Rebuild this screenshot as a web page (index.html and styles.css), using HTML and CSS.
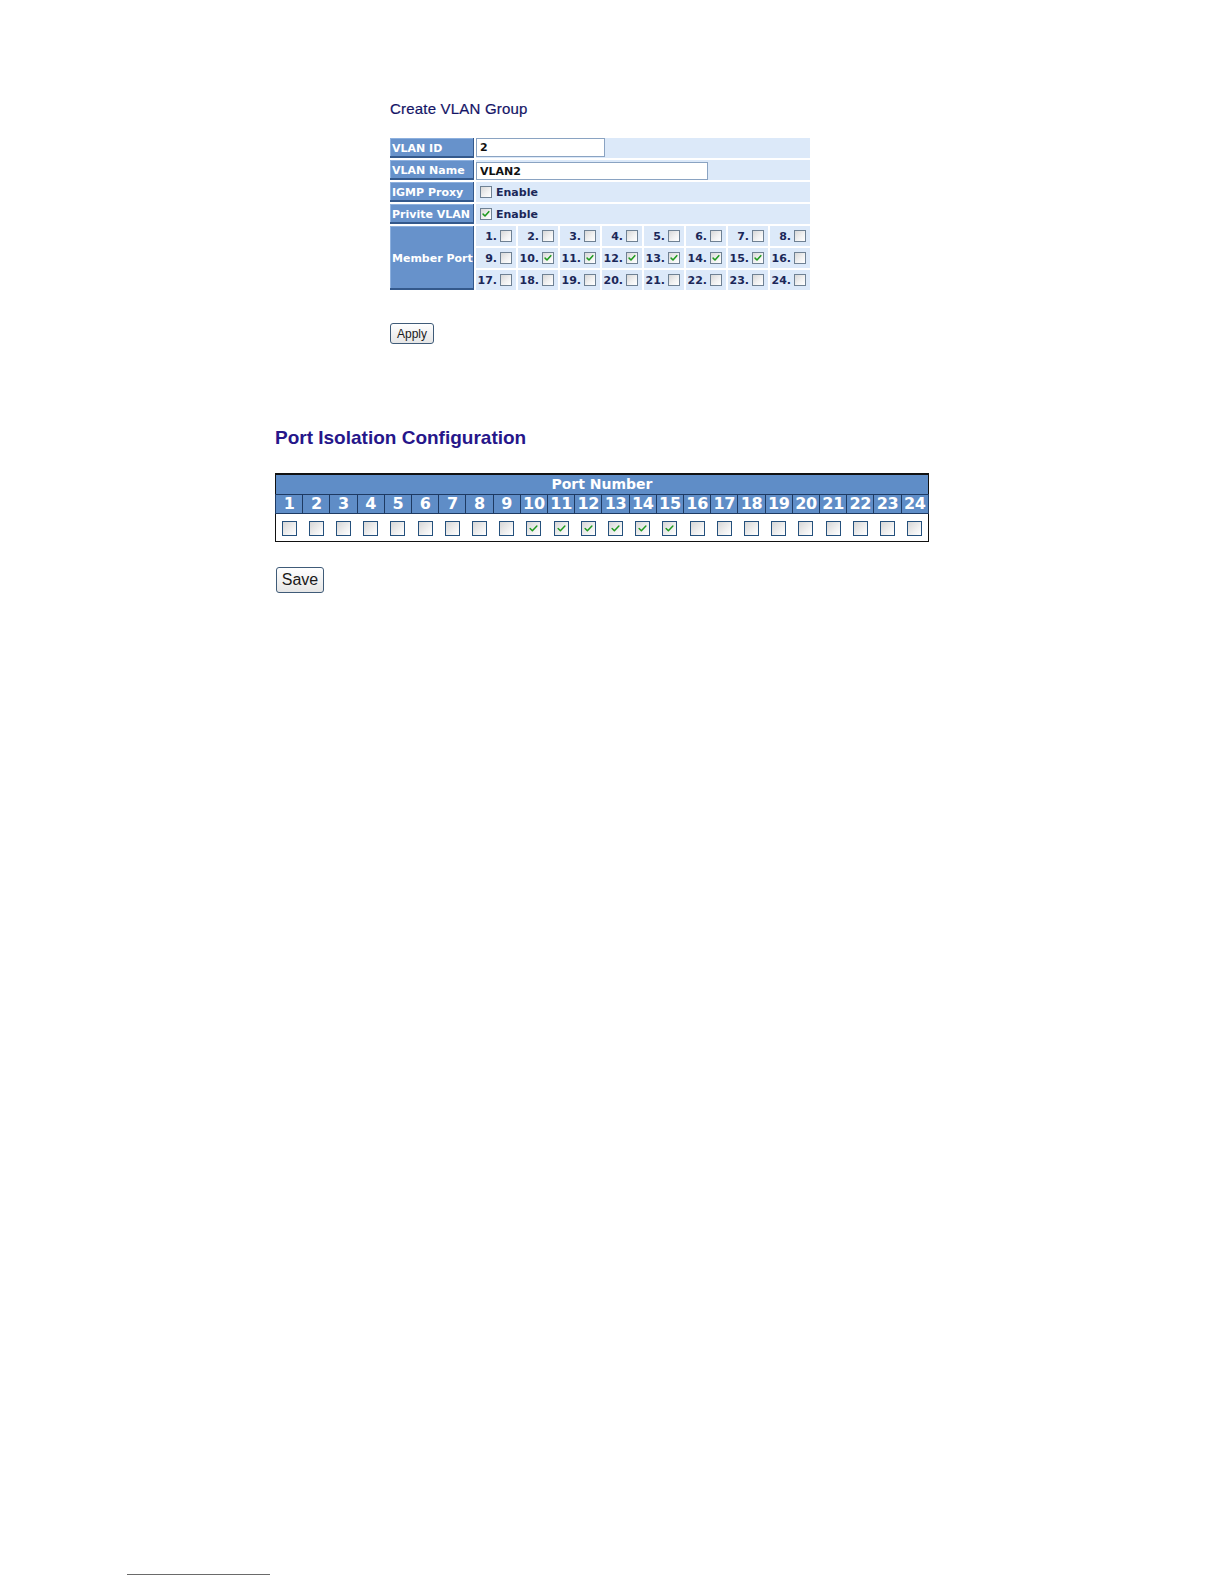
FILE: index.html
```html
<!DOCTYPE html>
<html>
<head>
<meta charset="utf-8">
<title>VLAN</title>
<link rel="stylesheet" href="styles.css">
</head>
<body>
<div class="page">
  <section class="vlan">
    <h2 class="vlan-title">Create VLAN Group</h2>
    <div class="vgrid">
      <div class="lbl r1">VLAN ID</div>
      <div class="val r1"><input class="txt txt-id" type="text" value="2" readonly></div>
      <div class="lbl r2">VLAN Name</div>
      <div class="val r2"><input class="txt txt-name" type="text" value="VLAN2" readonly></div>
      <div class="lbl r3">IGMP Proxy</div>
      <div class="val r3"><span class="cb"></span><span class="en">Enable</span></div>
      <div class="lbl r4">Privite VLAN</div>
      <div class="val r4"><span class="cb on"><svg viewBox="0 0 11 11"><path d="M2.3 5.6 L4.4 7.7 L8.6 2.9"/></svg></span><span class="en">Enable</span></div>
      <div class="lbl member">Member Port</div>
      <div class="mp"><span class="n">1.</span><span class="cb"></span></div>
      <div class="mp"><span class="n">2.</span><span class="cb"></span></div>
      <div class="mp"><span class="n">3.</span><span class="cb"></span></div>
      <div class="mp"><span class="n">4.</span><span class="cb"></span></div>
      <div class="mp"><span class="n">5.</span><span class="cb"></span></div>
      <div class="mp"><span class="n">6.</span><span class="cb"></span></div>
      <div class="mp"><span class="n">7.</span><span class="cb"></span></div>
      <div class="mp"><span class="n">8.</span><span class="cb"></span></div>
      <div class="mp"><span class="n">9.</span><span class="cb"></span></div>
      <div class="mp"><span class="n">10.</span><span class="cb on"><svg viewBox="0 0 11 11"><path d="M2.3 5.6 L4.4 7.7 L8.6 2.9"/></svg></span></div>
      <div class="mp"><span class="n">11.</span><span class="cb on"><svg viewBox="0 0 11 11"><path d="M2.3 5.6 L4.4 7.7 L8.6 2.9"/></svg></span></div>
      <div class="mp"><span class="n">12.</span><span class="cb on"><svg viewBox="0 0 11 11"><path d="M2.3 5.6 L4.4 7.7 L8.6 2.9"/></svg></span></div>
      <div class="mp"><span class="n">13.</span><span class="cb on"><svg viewBox="0 0 11 11"><path d="M2.3 5.6 L4.4 7.7 L8.6 2.9"/></svg></span></div>
      <div class="mp"><span class="n">14.</span><span class="cb on"><svg viewBox="0 0 11 11"><path d="M2.3 5.6 L4.4 7.7 L8.6 2.9"/></svg></span></div>
      <div class="mp"><span class="n">15.</span><span class="cb on"><svg viewBox="0 0 11 11"><path d="M2.3 5.6 L4.4 7.7 L8.6 2.9"/></svg></span></div>
      <div class="mp"><span class="n">16.</span><span class="cb"></span></div>
      <div class="mp"><span class="n">17.</span><span class="cb"></span></div>
      <div class="mp"><span class="n">18.</span><span class="cb"></span></div>
      <div class="mp"><span class="n">19.</span><span class="cb"></span></div>
      <div class="mp"><span class="n">20.</span><span class="cb"></span></div>
      <div class="mp"><span class="n">21.</span><span class="cb"></span></div>
      <div class="mp"><span class="n">22.</span><span class="cb"></span></div>
      <div class="mp"><span class="n">23.</span><span class="cb"></span></div>
      <div class="mp"><span class="n">24.</span><span class="cb"></span></div>
    </div>
    <button class="btn btn-apply" type="button">Apply</button>
  </section>

  <section class="iso">
    <h2 class="iso-title">Port Isolation Configuration</h2>
    <table class="ptable">
      <tr><th class="phead" colspan="24">Port Number</th></tr>
      <tr class="nums">
        <td>1</td><td>2</td><td>3</td><td>4</td><td>5</td><td>6</td><td>7</td><td>8</td><td>9</td><td>10</td><td>11</td><td>12</td><td>13</td><td>14</td><td>15</td><td>16</td><td>17</td><td>18</td><td>19</td><td>20</td><td>21</td><td>22</td><td>23</td><td>24</td>
      </tr>
      <tr class="boxes">
        <td><span class="bcb"></span></td>
        <td><span class="bcb"></span></td>
        <td><span class="bcb"></span></td>
        <td><span class="bcb"></span></td>
        <td><span class="bcb"></span></td>
        <td><span class="bcb"></span></td>
        <td><span class="bcb"></span></td>
        <td><span class="bcb"></span></td>
        <td><span class="bcb"></span></td>
        <td><span class="bcb on"><svg viewBox="0 0 15 15"><path d="M3.6 7.6 L6.2 10.1 L11.4 4.6"/></svg></span></td>
        <td><span class="bcb on"><svg viewBox="0 0 15 15"><path d="M3.6 7.6 L6.2 10.1 L11.4 4.6"/></svg></span></td>
        <td><span class="bcb on"><svg viewBox="0 0 15 15"><path d="M3.6 7.6 L6.2 10.1 L11.4 4.6"/></svg></span></td>
        <td><span class="bcb on"><svg viewBox="0 0 15 15"><path d="M3.6 7.6 L6.2 10.1 L11.4 4.6"/></svg></span></td>
        <td><span class="bcb on"><svg viewBox="0 0 15 15"><path d="M3.6 7.6 L6.2 10.1 L11.4 4.6"/></svg></span></td>
        <td><span class="bcb on"><svg viewBox="0 0 15 15"><path d="M3.6 7.6 L6.2 10.1 L11.4 4.6"/></svg></span></td>
        <td><span class="bcb"></span></td>
        <td><span class="bcb"></span></td>
        <td><span class="bcb"></span></td>
        <td><span class="bcb"></span></td>
        <td><span class="bcb"></span></td>
        <td><span class="bcb"></span></td>
        <td><span class="bcb"></span></td>
        <td><span class="bcb"></span></td>
        <td><span class="bcb"></span></td>
      </tr>
    </table>
    <button class="btn btn-save" type="button">Save</button>
  </section>

  <div class="footrule"></div>
</div>
</body>
</html>
```

FILE: styles.css
```css
html, body {
  margin: 0;
  padding: 0;
  background: #ffffff;
}

.page {
  width: 1224px;
  font-family: "Liberation Sans", Arial, sans-serif;
}

/* ---------- Create VLAN Group ---------- */
.vlan {
  padding-top: 100px;
  padding-left: 390px;
}

.vlan-title {
  margin: 0;
  font-family: "Liberation Sans", Arial, sans-serif;
  font-size: 15px;
  font-weight: normal;
  letter-spacing: 0.2px;
  line-height: 17px;
  color: #141466;
  -webkit-text-stroke: 0.2px #141466;
}

.vgrid {
  margin-top: 21px;
  width: 420px;
  display: grid;
  grid-template-columns: 84px repeat(8, 1fr);
  grid-auto-rows: 20px;
  gap: 2px;
  font-family: "DejaVu Sans", Verdana, sans-serif;
  font-size: 11px;
  font-weight: bold;
}

.lbl {
  grid-column: 1;
  background: #6792cb;
  color: #ffffff;
  display: flex;
  align-items: center;
  padding-left: 2px;
  box-sizing: border-box;
  box-shadow: inset -1px -2px 0 #34598c, inset 1px 1px 0 #8db0de;
  white-space: nowrap;
}

.lbl.member {
  grid-row: 5 / span 3;
}

.val {
  grid-column: 2 / span 8;
  background: #dce9f9;
  display: flex;
  align-items: center;
  padding-left: 4px;
  color: #1b2758;
}

.val.r1, .val.r2 {
  padding-left: 0;
  align-items: flex-start;
}

.txt {
  box-sizing: border-box;
  margin: 0;
  border: 1px solid #8aa3c2;
  background: #ffffff;
  font-family: "DejaVu Sans", Verdana, sans-serif;
  font-size: 11px;
  font-weight: bold;
  color: #111111;
  padding: 0 3px;
  outline: none;
}

.txt-id {
  width: 129px;
  height: 19px;
}

.txt-name {
  margin-top: 2px;
  width: 232px;
  height: 18px;
}

.en {
  margin-left: 4px;
}

.cb {
  box-sizing: border-box;
  display: inline-block;
  width: 12px;
  height: 12px;
  border: 1px solid #6f8193;
  background: linear-gradient(135deg, #d8d8d8 0%, #f3f3f3 60%, #ffffff 100%);
  flex: none;
}

.cb svg {
  display: block;
  width: 10px;
  height: 10px;
}

.cb path, .bcb path {
  fill: none;
  stroke: #1f9a1f;
  stroke-width: 1.7;
  stroke-linecap: round;
  stroke-linejoin: round;
}

.mp {
  background: #dce9f9;
  display: flex;
  align-items: center;
  justify-content: flex-end;
  padding-right: 4px;
  color: #1b2758;
}

.mp .n {
  margin-right: 3px;
}

.btn {
  display: block;
  box-sizing: border-box;
  margin: 0;
  padding: 0;
  border: 1px solid #3f5b78;
  border-radius: 3px;
  background: linear-gradient(#ffffff, #e6e6e6);
  color: #1a1a1a;
  font-family: "Liberation Sans", Arial, sans-serif;
}

.btn-apply {
  margin-top: 33px;
  width: 44px;
  height: 21px;
  font-size: 12px;
}

/* ---------- Port Isolation ---------- */
.iso {
  padding-top: 83px;
  padding-left: 275px;
}

.iso-title {
  margin: 0;
  font-family: "Liberation Sans", Arial, sans-serif;
  font-size: 19px;
  font-weight: bold;
  line-height: 22px;
  color: #26168a;
}

.ptable {
  margin-top: 24px;
  width: 654px;
  table-layout: fixed;
  border-collapse: collapse;
  border: 1px solid #111111;
  border-top: 2px solid #111111;
  font-family: "DejaVu Sans", Verdana, sans-serif;
  font-weight: bold;
  color: #ffffff;
}

.phead {
  background: #5f8dc7;
  font-size: 14px;
  height: 19px;
  line-height: 19px;
  padding: 0;
  text-align: center;
}

.nums td {
  background: #5f8dc7;
  border: 1px solid #1e3a62;
  font-size: 16px;
  line-height: 18px;
  height: 18px;
  padding: 0;
  text-align: center;
  letter-spacing: -0.3px;
}

.boxes td {
  height: 27px;
  padding: 0;
  text-align: center;
  vertical-align: middle;
  background: #ffffff;
}

.bcb {
  box-sizing: border-box;
  display: inline-block;
  width: 15px;
  height: 15px;
  border: 1px solid #24507c;
  background: linear-gradient(135deg, #d6d6d6 0%, #f0f0f0 60%, #ffffff 100%);
  vertical-align: middle;
}

.bcb svg {
  display: block;
  width: 13px;
  height: 13px;
}

.btn-save {
  margin-top: 25px;
  margin-left: 1px;
  width: 48px;
  height: 26px;
  font-size: 16px;
}

.footrule {
  margin-top: 981px;
  margin-left: 127px;
  width: 143px;
  height: 1px;
  background: #6a6a6a;
}
```
